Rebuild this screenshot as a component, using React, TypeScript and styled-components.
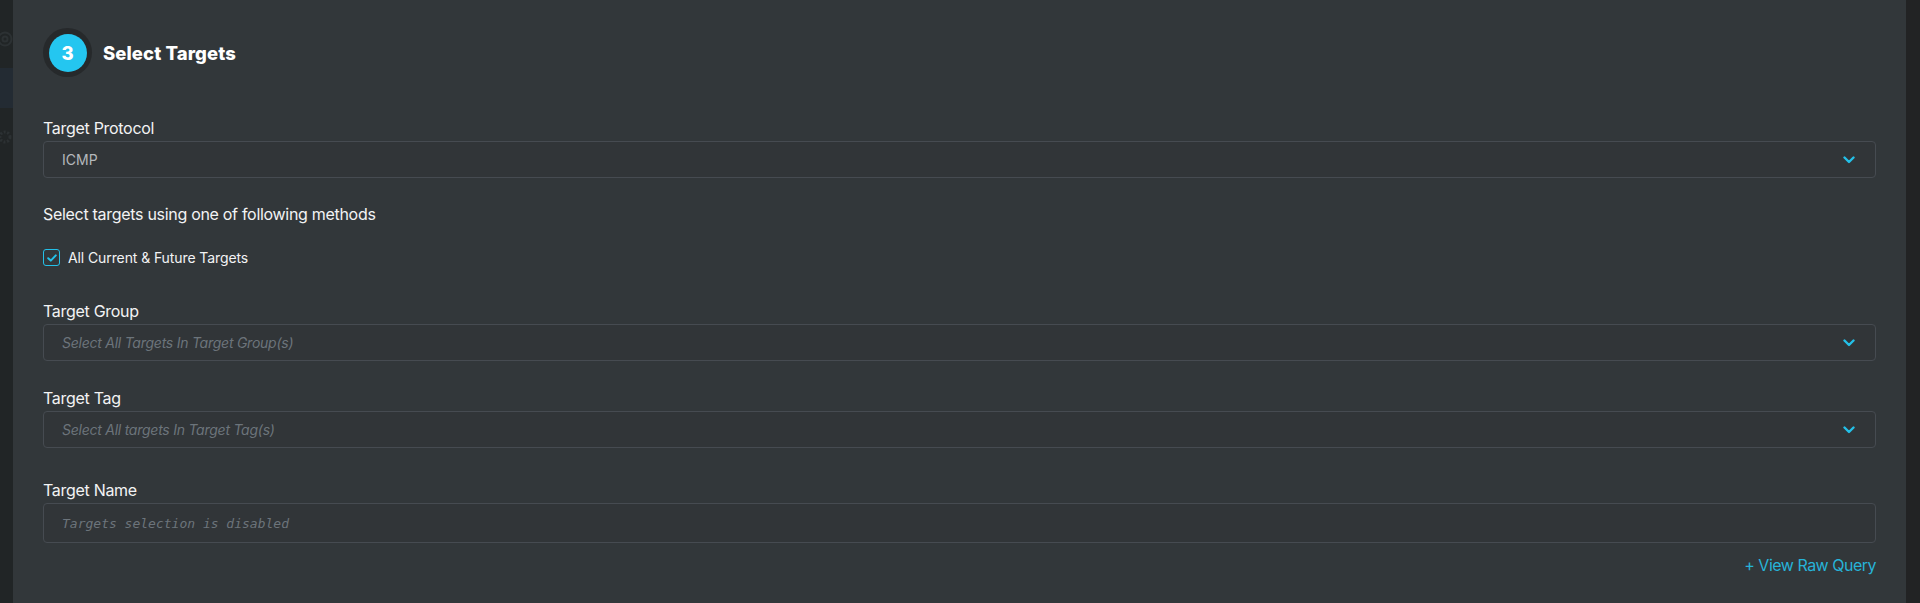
import styled, { createGlobalStyle } from 'styled-components';

const GlobalStyle = createGlobalStyle`
  html, body {
    margin: 0;
    padding: 0;
    background: #222324;
  }
  body {
    font-family: Inter, 'Noto Sans', sans-serif;
    color: #f2f3f4;
  }
`;

const Page = styled.div`
  display: flex;
  width: 1920px;
  height: 603px;
  overflow: hidden;
`;

const SideStrip = styled.div`
  width: 13px;
  flex-shrink: 0;
  background: #212526;
  display: flex;
  flex-direction: column;
  align-items: flex-start;
  padding-top: 30px;
  box-sizing: border-box;
`;

const SideIcon = styled.div<{ $top?: number }>`
  margin-left: -4px;
  margin-top: ${(p) => p.$top ?? 0}px;
  color: #2c3133;
  height: 18px;
`;

const SideBand = styled.div`
  margin-top: 20px;
  width: 13px;
  height: 40px;
  background: #232b33;
`;

const RightStrip = styled.div`
  width: 14px;
  flex-shrink: 0;
  background: #222324;
`;

const Panel = styled.div`
  flex: 1;
  background: #32373a;
  padding: 28px 30px 0 30px;
  box-sizing: border-box;
  display: flex;
  flex-direction: column;
`;

const Header = styled.div`
  display: flex;
  align-items: center;
  gap: 11px;
  margin-bottom: 41px;
`;

const StepRing = styled.div`
  width: 49px;
  height: 49px;
  border-radius: 50%;
  background: #26292b;
  display: flex;
  align-items: center;
  justify-content: center;
`;

const StepDot = styled.div`
  width: 38px;
  height: 38px;
  border-radius: 50%;
  background: #24c6f0;
  color: #fff;
  font-weight: 800;
  font-size: 18.5px;
  display: flex;
  align-items: center;
  justify-content: center;
`;

const Title = styled.h2`
  margin: 0;
  font-size: 18.5px;
  font-weight: 800;
  color: #fff;
  letter-spacing: 0.1px;
`;

const Label = styled.div<{ $gap?: number }>`
  font-size: 16px;
  line-height: 20px;
  letter-spacing: -0.3px;
  color: #f2f3f4;
  margin-top: ${(p) => p.$gap ?? 0}px;
  margin-bottom: 3px;
`;

const SelectBox = styled.div<{ $h?: number }>`
  position: relative;
  height: ${(p) => p.$h ?? 37}px;
  box-sizing: border-box;
  border: 1px solid #464b51;
  border-radius: 4px;
  background: #313538;
  display: flex;
  align-items: center;
  padding: 0 18px;
`;

const Value = styled.span`
  font-size: 14px;
  color: #b4b8bc;
`;

const Placeholder = styled.span`
  font-size: 14px;
  font-style: italic;
  letter-spacing: -0.25px;
  color: #6c747b;
`;

const MonoPlaceholder = styled.span`
  font-family: 'DejaVu Sans Mono', 'Liberation Mono', monospace;
  font-size: 13px;
  font-style: italic;
  color: #6c747b;
`;

const Chevron = styled.svg`
  position: absolute;
  right: 20px;
  top: 50%;
  margin-top: -4px;
`;

const Hint = styled.div`
  font-size: 16px;
  line-height: 20px;
  letter-spacing: -0.3px;
  color: #f2f3f4;
  margin-top: 26px;
`;

const CheckRow = styled.label`
  display: flex;
  align-items: center;
  gap: 8px;
  margin-top: 25px;
  font-size: 14px;
  letter-spacing: -0.1px;
  color: #f2f3f4;
`;

const CheckBox = styled.span`
  width: 17px;
  height: 17px;
  box-sizing: border-box;
  border: 1.5px solid #24c0e8;
  border-radius: 3px;
  display: flex;
  align-items: center;
  justify-content: center;
`;

const RawQuery = styled.a`
  align-self: flex-end;
  margin-top: 12px;
  font-size: 16px;
  line-height: 20px;
  letter-spacing: -0.5px;
  color: #27b3d8;
  text-decoration: none;
  cursor: pointer;
`;

function DownArrow() {
  return (
    <Chevron width="12" height="8" viewBox="0 0 12 8">
      <path d="M1.5 1.5 L6 6 L10.5 1.5" fill="none" stroke="#24c0e8" strokeWidth="2.4" strokeLinecap="round" strokeLinejoin="round" />
    </Chevron>
  );
}

function SelectField({ label, gap, value, placeholder }: { label: string; gap?: number; value?: string; placeholder?: string }) {
  return (
    <>
      <Label $gap={gap}>{label}</Label>
      <SelectBox>
        {value ? <Value>{value}</Value> : <Placeholder>{placeholder}</Placeholder>}
        <DownArrow />
      </SelectBox>
    </>
  );
}

export default function App() {
  return (
    <Page>
      <GlobalStyle />
      <SideStrip>
        <SideIcon>
          <svg width="18" height="18" viewBox="0 0 18 18">
            <circle cx="9" cy="9" r="6.5" fill="none" stroke="currentColor" strokeWidth="2" />
            <circle cx="9" cy="9" r="2.5" fill="none" stroke="currentColor" strokeWidth="2" />
          </svg>
        </SideIcon>
        <SideBand />
        <SideIcon $top={20}>
          <svg width="18" height="18" viewBox="0 0 18 18">
            <circle cx="9" cy="9" r="5" fill="none" stroke="currentColor" strokeWidth="3" strokeDasharray="2 1.6" />
          </svg>
        </SideIcon>
      </SideStrip>
      <Panel>
        <Header>
          <StepRing>
            <StepDot>3</StepDot>
          </StepRing>
          <Title>Select Targets</Title>
        </Header>

        <SelectField label="Target Protocol" value="ICMP" />

        <Hint>Select targets using one of following methods</Hint>

        <CheckRow>
          <CheckBox>
            <svg width="10" height="8" viewBox="0 0 10 8">
              <path d="M1.2 4.2 L3.8 6.6 L8.8 1.4" fill="none" stroke="#24c0e8" strokeWidth="2" strokeLinecap="round" strokeLinejoin="round" />
            </svg>
          </CheckBox>
          All Current &amp; Future Targets
        </CheckRow>

        <SelectField label="Target Group" gap={35} placeholder="Select All Targets In Target Group(s)" />
        <SelectField label="Target Tag" gap={27} placeholder="Select All targets In Target Tag(s)" />

        <Label $gap={32}>Target Name</Label>
        <SelectBox $h={40}>
          <MonoPlaceholder>Targets selection is disabled</MonoPlaceholder>
        </SelectBox>

        <RawQuery>+ View Raw Query</RawQuery>
      </Panel>
      <RightStrip />
    </Page>
  );
}
